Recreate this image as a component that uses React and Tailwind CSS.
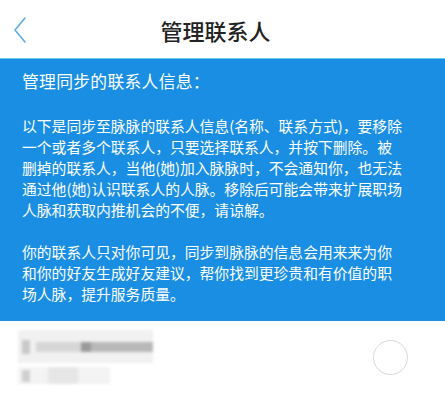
const font = "font-['Noto_Sans_CJK_SC','Noto_Sans',sans-serif]"

const para1 = [
  '以下是同步至脉脉的联系人信息(名称、联系方式)，要移除',
  '一个或者多个联系人，只要选择联系人，并按下删除。被',
  '删掉的联系人，当他(她)加入脉脉时，不会通知你，也无法',
  '通过他(她)认识联系人的人脉。移除后可能会带来扩展职场',
  '人脉和获取内推机会的不便，请谅解。',
]

const para2 = [
  '你的联系人只对你可见，同步到脉脉的信息会用来来为你',
  '和你的好友生成好友建议，帮你找到更珍贵和有价值的职',
  '场人脉，提升服务质量。',
]

function BackIcon() {
  return (
    <svg width="14" height="28" viewBox="0 0 14 28" fill="none">
      <path d="M12 2 L2 14 L12 26" stroke="#5aaee2" strokeWidth="1.6" strokeLinecap="round" strokeLinejoin="round" />
    </svg>
  )
}

export default function App() {
  return (
    <div className={`w-[445px] h-[405px] bg-white overflow-hidden ${font}`}>
      <header className="h-[58px] flex items-center relative">
        <div className="pl-[13px] pt-[1px]">
          <BackIcon />
        </div>
        <h1 className="absolute left-0 right-[14px] text-center text-[22px] leading-none font-medium text-[#222] pt-[1px]">管理联系人</h1>
      </header>

      <section className="bg-[#1a8ee2] border-t border-[#6cc7f2] text-white px-[22px] pt-[10px] h-[263px] whitespace-nowrap">
        <h2 className="text-[16.8px] leading-[24px] tracking-[0.3px]">管理同步的联系人信息：</h2>
        <div className="mt-[22px] text-[14.8px] leading-[21px]">
          <p>
            {para1.map((line) => (
              <span key={line} className="block">{line}</span>
            ))}
          </p>
          <p className="mt-[21px]">
            {para2.map((line) => (
              <span key={line} className="block">{line}</span>
            ))}
          </p>
        </div>
      </section>

      <div className="flex items-center justify-between pl-[18px] pr-[37px] pt-[9px]">
        <div className="flex flex-col blur-[1.5px]">
          <div className="flex h-[33px] w-[135px] bg-[#f1f1f1] items-center">
            <div className="w-[8px] h-[14px] bg-[#c8c8c8] ml-[4px]" />
            <div className="flex-1 h-[10px] bg-[#d6d6d6] ml-[6px] flex">
              <div className="w-[45px]" />
              <div className="w-[10px] bg-[#9a9a9a]" />
              <div className="flex-1 bg-[#b8b8b8]" />
            </div>
          </div>
          <div className="flex h-[17px] w-[92px] mt-[4px] items-center bg-[#f3f3f3]">
            <div className="w-[8px] h-[12px] bg-[#d0d0d0] ml-[4px]" />
            <div className="ml-[18px] w-[30px] h-full bg-[#e6e6e6]" />
          </div>
        </div>
        <div className="w-[35px] h-[35px] rounded-full border border-[#d8d8d8]" />
      </div>
    </div>
  )
}
